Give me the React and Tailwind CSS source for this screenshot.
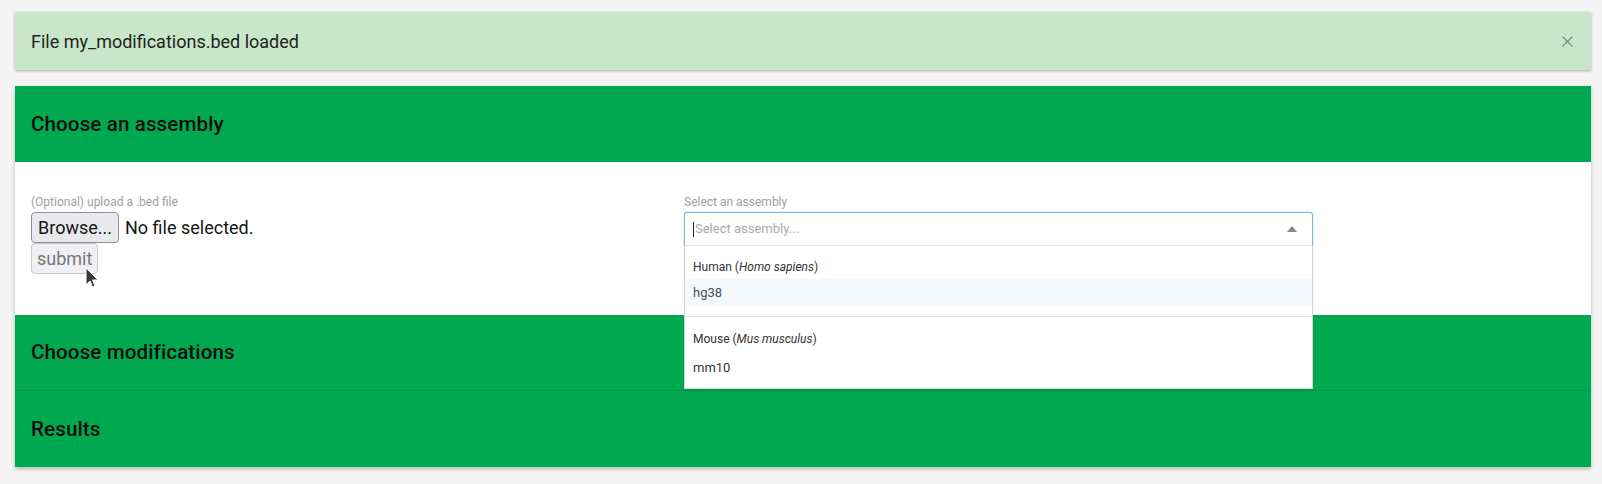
import React from "react";

function Header({ title, border }) {
  return (
    <div
      className={
        "h-[76px] bg-[#00a94f] px-4 flex items-center " +
        (border ? "border-b border-[#009a48]" : "")
      }
    >
      <h3 className="text-[20.6px] font-medium text-[#0d0d0d] tracking-[0.1px]">{title}</h3>
    </div>
  );
}

export default function App() {
  return (
    <div
      className="min-h-screen bg-[#f4f4f4] pt-3 px-[15px] pr-[11px]"
      style={{ fontFamily: "Roboto, 'Liberation Sans', sans-serif" }}
    >
      {/* alert */}
      <div className="h-[58px] bg-[#c8e6c9] shadow-[0_1px_3px_rgba(0,0,0,0.3)] flex items-center justify-between pl-4 pr-[18px]">
        <span className="text-[18px] text-[#222]">File my_modifications.bed loaded</span>
        <svg width="11" height="11" viewBox="0 0 11 11" className="block">
          <path d="M0.5 0.5 L10.5 10.5 M10.5 0.5 L0.5 10.5" stroke="#7f8f7f" strokeWidth="1.3" />
        </svg>
      </div>

      {/* panel */}
      <div className="mt-4 shadow-[0_2px_4px_rgba(0,0,0,0.25)]">
        <Header title="Choose an assembly" />
        <div className="relative bg-white h-[153px] pl-4 pt-[33px] flex">
          <div className="w-[653px] relative">
            <div className="text-[12px] leading-[14px] text-[#a0a0a0] mb-[3px]">(Optional) upload a .bed file</div>
            <div className="flex items-center">
              <button className="h-[31px] px-[6px] bg-[#e9e9ed] border border-[#8f8f9d] rounded-[4px] text-[18px] text-[#151515] leading-none">
                Browse...
              </button>
              <span className="ml-[6px] text-[18px] text-[#151515]">No file selected.</span>
            </div>
            <button
              disabled
              className="mt-0 h-[31px] px-[5px] bg-[#f0f0f4] border border-[#c8c8cf] rounded-[4px] text-[18px] text-[#777] leading-none"
            >
              submit
            </button>
            {/* mouse pointer */}
            <svg className="absolute left-[54px] top-[72px]" width="14" height="22" viewBox="0 0 14 22">
              <path d="M1 1 L1 18 L5 14 L7.5 20 L10 19 L7.5 13 L13 13 Z" fill="#3a3a3a" stroke="#fff" strokeWidth="1" />
            </svg>
          </div>
          <div className="w-[629px] relative z-10">
            <div className="text-[12px] leading-[14px] text-[#a0a0a0] mb-[3px]">Select an assembly</div>
            <div className="h-[34px] border border-[#7eb6e6] border-b-[#e6e6e6] rounded-t-[3px] bg-white flex items-center pl-[8px] pr-[15px] shadow-[0_0_0_1px_rgba(102,175,233,0.15)]">
              <span className="w-px h-[15px] bg-[#222] mr-[1px]"></span>
              <span className="text-[13px] text-[#aaa] flex-1">Select assembly...</span>
              <svg width="10" height="6" viewBox="0 0 10 6">
                <path d="M0 6 L5 0 L10 6 Z" fill="#888" />
              </svg>
            </div>
            <div className="bg-white border border-t-0 border-[#d4d4d4] shadow-[0_1px_2px_rgba(0,0,0,0.12)] text-[13px] text-[#333]">
              <div className="h-[33px] flex items-end pb-[3px] pl-[8px] text-[12px]">
                <span>
                  Human (<i>Homo sapiens</i>)
                </span>
              </div>
              <div className="h-[28px] bg-[#f4f9fd] flex items-center pl-[8px] text-[#44525f]">hg38</div>
              <div className="h-[9px]"></div>
              <div className="border-t border-[#e2e2e2]"></div>
              <div className="h-[37px] flex items-end pb-[6px] pl-[8px] text-[12px]">
                <span>
                  Mouse (<i>Mus musculus</i>)
                </span>
              </div>
              <div className="h-[28px] flex items-center pl-[8px]">mm10</div>
              <div className="h-[6px]"></div>
            </div>
          </div>
        </div>
        <Header title="Choose modifications" border />
        <Header title="Results" />
      </div>
    </div>
  );
}
